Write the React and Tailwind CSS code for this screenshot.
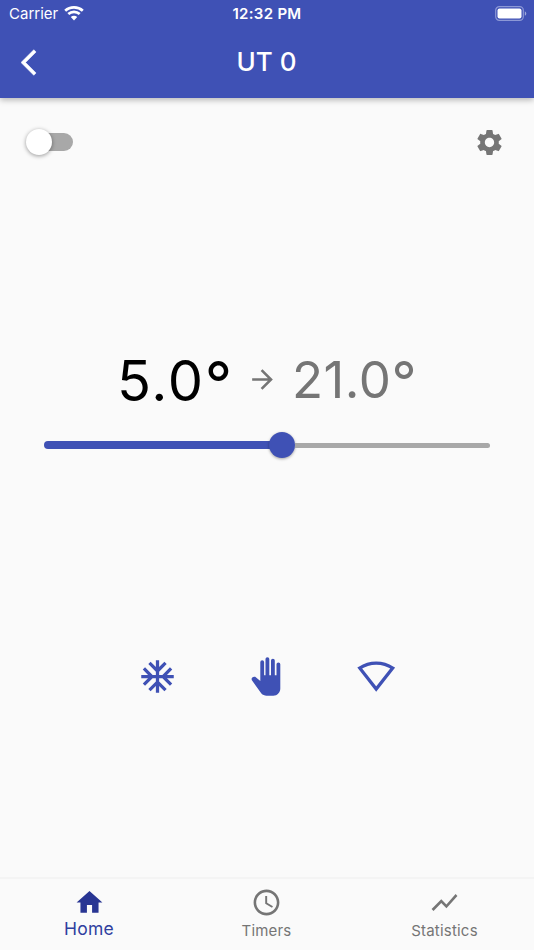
import React from "react";
import {
  MdAccessTime,
  MdAcUnit,
  MdArrowForward,
  MdSettings,
  MdShowChart,
} from "react-icons/md";

const WifiIcon = () => (
  <svg width="20" height="15" viewBox="0 0 20 15" fill="none" stroke="white">
    <path d="M1.2 4.8C6 .3 14 .3 18.8 4.8" strokeWidth="2.7" />
    <path d="M4.3 8.1c3.2-3 8.2-3 11.4 0" strokeWidth="2.7" />
    <path d="M6.8 11c1.9-1.6 4.5-1.6 6.4 0L10 14.4z" fill="white" stroke="none" />
  </svg>
);

const BatteryIcon = () => (
  <svg width="32" height="15" viewBox="0 0 32 15" fill="none">
    <rect x=".7" y=".7" width="27.6" height="13.6" rx="3.6" stroke="#8c98d6" strokeWidth="1.2" />
    <rect x="2.5" y="2.5" width="24" height="10" rx="2" fill="white" />
    <path d="M29.8 5.2c2 .9 2 3.7 0 4.6z" fill="#9fa8da" />
  </svg>
);

const BackIcon = () => (
  <svg width="31" height="31" viewBox="0 0 24 24" fill="white" stroke="white" strokeWidth="0.4">
    <path d="M11.67 3.87L9.9 2.1 0 12l9.9 9.9 1.77-1.77L3.54 12z" />
  </svg>
);

const HomeIcon = () => (
  <svg width="31" height="31" viewBox="0 0 24 24" fill="currentColor">
    <path d="M10 20v-6h4v6h5v-8h3L12 3 2 12h3v8z" />
  </svg>
);

const HandIcon = () => (
  <svg width="30" height="39" viewBox="0 0 30 39" fill="currentColor">
    <path d="M29.3 7.3v24.2c0 4-3 7.2-7 7.2h-6.8c-2 0-3.8-.8-5.1-2.2L.9 23.2c-1.1-1.7.8-4.2 3.3-3.4L9.3 24V5.2a1.9 1.9 0 0 1 3.8 0v13h1.4V2.1a1.9 1.9 0 0 1 3.8 0v16.1H20V3.6a1.9 1.9 0 0 1 3.8 0v14.6h1.7V7.3a1.9 1.9 0 0 1 3.8 0z" />
  </svg>
);

const SignalIcon = () => (
  <svg width="38" height="32" viewBox="0 0 38 32" fill="none" stroke="currentColor" strokeWidth="3.3">
    <path d="M2.7 8C12.6 1.4 25.8 1.4 35.7 8L19.2 29z" />
  </svg>
);

const tabs = [
  { label: "Home", icon: <HomeIcon />, active: true },
  { label: "Timers", icon: <MdAccessTime size={31} /> },
  { label: "Statistics", icon: <MdShowChart size={31} /> },
];

export default function App() {
  return (
    <div className="flex h-[950px] w-[534px] flex-col overflow-hidden bg-[#fafafa] font-['Inter',sans-serif]">
      {/* App bar */}
      <header className="h-[98px] shrink-0 bg-[#3f51b5] text-white shadow-[0_2px_6px_rgba(0,0,0,0.28)]">
        <div className="grid h-[27px] grid-cols-3 items-center pr-[7px] pl-[9px]">
          <div className="flex items-center gap-[6px]">
            <span className="pt-[2px] text-[15px]">Carrier</span>
            <WifiIcon />
          </div>
          <span className="pt-[2px] pr-[2px] text-center text-[15px] font-semibold tracking-[0.3px]">12:32 PM</span>
          <div className="flex justify-end">
            <BatteryIcon />
          </div>
        </div>
        <div className="grid h-[71px] grid-cols-3 items-center pr-[22px] pl-[21px]">
          <BackIcon />
          <h1 className="pb-[2px] text-center text-[26px] font-medium">UT 0</h1>
        </div>
      </header>

      <main className="flex flex-1 flex-col">
        <div className="flex h-[88px] items-center justify-between pr-[29px] pl-[26px]">
          <div className="flex h-[26px] w-[47px] items-center rounded-full">
            <div className="z-10 h-[26px] w-[26px] shrink-0 rounded-full bg-white shadow-[0_1px_4px_rgba(0,0,0,0.4)]" />
            <div className="-ml-[18px] h-[18px] w-[38.5px] shrink-0 rounded-full bg-[#a8a8a8]" />
          </div>
          <MdSettings size={31} className="text-[#757575]" />
        </div>

        {/* Temperature */}
        <div className="mt-[159px] flex h-[70px] items-center pl-[117px]">
          <span className="w-[130px] pt-[2px] text-[56px] leading-[70px] tracking-[1.7px] text-black">
            5.0<span className="align-[-4px] text-[60px] leading-none">°</span>
          </span>
          <MdArrowForward size={31} className="mb-px shrink-0 text-[#757575]" />
          <span className="ml-[14px] text-[51px] leading-[70px] tracking-[0.5px] text-[#757575]">
            21.0<span className="align-[-3px] text-[55px] leading-none">°</span>
          </span>
        </div>
        <div className="mx-[44px] mt-[17px] flex h-[26px] items-center">
          <div className="h-2 w-[230px] rounded-l-full bg-[#3f51b5]" />
          <div className="-ml-[5px] h-[26px] w-[26px] rounded-full bg-[#3f51b5] shadow-[0_1px_3px_rgba(0,0,0,0.35)]" />
          <div className="h-[5px] flex-1 rounded-r-full bg-[#a8a8a8]" />
        </div>

        {/* Modes */}
        <div className="mt-[198px] flex h-[40px] items-center pl-[138px] text-[#3f51b5]">
          <MdAcUnit size={39} />
          <div className="ml-[74px]">
            <HandIcon />
          </div>
          <div className="ml-[76px]">
            <SignalIcon />
          </div>
        </div>
      </main>

      <nav className="grid h-[73px] shrink-0 grid-cols-3 border-t-2 border-[#f4f4f4]">
        {tabs.map((tab) => (
          <div
            key={tab.label}
            className={`flex flex-col items-center pt-[8px] ${tab.active ? "text-[#283593]" : "pr-px text-[#757575]"}`}
          >
            {tab.icon}
            <span
              className={
                tab.active
                  ? "text-[17.5px] leading-[22px] tracking-[0.3px] text-[#303f9f]"
                  : "text-[15px] leading-[25px] tracking-[0.2px]"
              }
            >
              {tab.label}
            </span>
          </div>
        ))}
      </nav>
    </div>
  );
}
